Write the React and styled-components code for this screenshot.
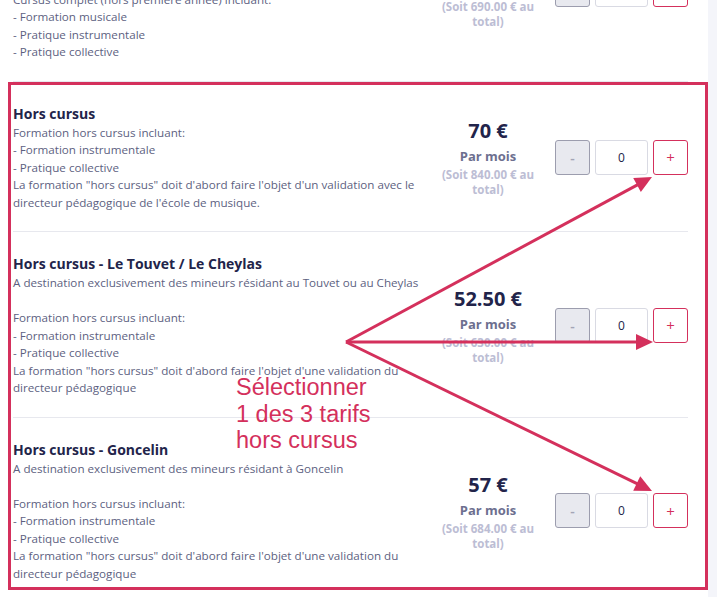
import React from "react";
import styled, { createGlobalStyle } from "styled-components";

const GlobalStyle = createGlobalStyle`
  html, body {
    margin: 0;
    padding: 0;
    background: #f4f5fa;
    overflow: hidden;
  }
  * { box-sizing: border-box; }
`;

const ACCENT = "#d4305c";

const offers = [
  {
    title: "Cursus complet",
    lines:
      "A destination des élèves inscrits en cursus\nTarif pour l'année scolaire\n\nCursus complet (hors première année) incluant:\n- Formation musicale\n- Pratique instrumentale\n- Pratique collective",
    price: "57.50 €",
    total: "690.00",
    offset: -104,
  },
  {
    title: "Hors cursus",
    lines:
      "Formation hors cursus incluant:\n- Formation instrumentale\n- Pratique collective\nLa formation \"hors cursus\" doit d'abord faire l'objet d'un validation avec le directeur pédagogique de l'école de musique.",
    price: "70 €",
    total: "840.00",
  },
  {
    title: "Hors cursus - Le Touvet / Le Cheylas",
    lines:
      "A destination exclusivement des mineurs résidant au Touvet ou au Cheylas\n\nFormation hors cursus incluant:\n- Formation instrumentale\n- Pratique collective\nLa formation \"hors cursus\" doit d'abord faire l'objet d'une validation du directeur pédagogique",
    price: "52.50 €",
    total: "630.00",
  },
  {
    title: "Hors cursus - Goncelin",
    lines:
      "A destination exclusivement des mineurs résidant à Goncelin\n\nFormation hors cursus incluant:\n- Formation instrumentale\n- Pratique collective\nLa formation \"hors cursus\" doit d'abord faire l'objet d'une validation du directeur pédagogique",
    price: "57 €",
    total: "684.00",
  },
];

const arrows = [
  { from: [346, 342], to: [652, 177] },
  { from: [346, 342], to: [653, 342] },
  { from: [346, 342], to: [652, 491] },
];

const Arrow = ({ from, to }) => {
  const [x1, y1] = from;
  const [x2, y2] = to;
  const dx = x2 - x1;
  const dy = y2 - y1;
  const len = Math.sqrt(dx * dx + dy * dy);
  const ux = dx / len;
  const uy = dy / len;
  const head = 17;
  const half = 8;
  const bx = x2 - ux * head;
  const by = y2 - uy * head;
  const pts = [
    [x2, y2],
    [bx - uy * half, by + ux * half],
    [bx + uy * half, by - ux * half],
  ]
    .map((p) => p.join(","))
    .join(" ");
  return (
    <g>
      <line x1={x1} y1={y1} x2={bx + ux * 2} y2={by + uy * 2} stroke={ACCENT} strokeWidth="3" />
      <polygon points={pts} fill={ACCENT} />
    </g>
  );
};

const App = () => {
  return (
    <Page>
      <GlobalStyle />
      <Panel>
        {offers.map((o, i) => (
          <Row key={i} $offset={o.offset}>
            <Info>
              <Title>{o.title}</Title>
              <Desc>{o.lines}</Desc>
            </Info>
            <PriceCol>
              <Price>{o.price}</Price>
              <Period>Par mois</Period>
              <Total>(Soit {o.total} € au total)</Total>
            </PriceCol>
            <Stepper>
              <MinusButton>-</MinusButton>
              <Qty>0</Qty>
              <PlusButton>+</PlusButton>
            </Stepper>
          </Row>
        ))}
      </Panel>

      <Frame />
      <Overlay width="717" height="597" viewBox="0 0 717 597">
        {arrows.map((a, i) => (
          <Arrow key={i} {...a} />
        ))}
      </Overlay>
      <Note>
        Sélectionner
        <br />1 des 3 tarifs
        <br />
        hors cursus
      </Note>
    </Page>
  );
};

export default App;

const Page = styled.div`
  position: relative;
  width: 717px;
  height: 597px;
  overflow: hidden;
  background: #f4f5fa;
`;

const Panel = styled.div`
  width: 708px;
  min-height: 700px;
  background: #ffffff;
  padding: 0 20px 0 13px;
  font-family: "Open Sans", "Noto Sans", sans-serif;
`;

const Row = styled.div`
  display: flex;
  align-items: center;
  padding: 22px 0 20px;
  border-bottom: 1px solid #e7e8ee;
  margin-top: ${({ $offset }) => ($offset ? `${$offset}px` : "0")};
`;

const Info = styled.div`
  flex: 0 0 425px;
`;

const Title = styled.div`
  font-size: 14px;
  font-weight: 700;
  line-height: 20px;
  color: #22244a;
`;

const Desc = styled.div`
  font-size: 11.65px;
  line-height: 17.5px;
  color: #5d5f7f;
  white-space: pre-line;
`;

const PriceCol = styled.div`
  flex: 0 0 100px;
  text-align: center;
`;

const Price = styled.div`
  font-size: 20px;
  font-weight: 700;
  line-height: 28px;
  color: #22244a;
`;

const Period = styled.div`
  font-size: 13px;
  font-weight: 700;
  line-height: 22px;
  color: #6d6f8f;
`;

const Total = styled.div`
  font-size: 11.5px;
  font-weight: 700;
  line-height: 15px;
  color: #bcbdd4;
  padding: 0 2px;
`;

const Stepper = styled.div`
  display: flex;
  gap: 5px;
  margin-left: 17px;
`;

const StepButton = styled.div`
  width: 35px;
  height: 35px;
  border-radius: 3px;
  display: flex;
  align-items: center;
  justify-content: center;
  font-size: 14px;
  font-weight: 600;
`;

const MinusButton = styled(StepButton)`
  background: #e8e9ef;
  border: 1px solid #9c9dae;
  color: #a3a4b6;
`;

const PlusButton = styled(StepButton)`
  background: #ffffff;
  border: 1px solid ${ACCENT};
  color: ${ACCENT};
  font-weight: 400;
  font-size: 15px;
`;

const Qty = styled.div`
  width: 53px;
  height: 35px;
  border: 1px solid #d9dae3;
  border-radius: 3px;
  display: flex;
  align-items: center;
  justify-content: center;
  font-size: 12px;
  color: #22244a;
`;

const Frame = styled.div`
  position: absolute;
  left: 8px;
  top: 82px;
  width: 700px;
  height: 508px;
  border: 3px solid ${ACCENT};
  pointer-events: none;
`;

const Overlay = styled.svg`
  position: absolute;
  left: 0;
  top: 0;
  pointer-events: none;
`;

const Note = styled.div`
  position: absolute;
  left: 236px;
  top: 374px;
  font-family: "Liberation Sans", Arial, sans-serif;
  font-size: 23.5px;
  line-height: 26.5px;
  color: ${ACCENT};
`;
